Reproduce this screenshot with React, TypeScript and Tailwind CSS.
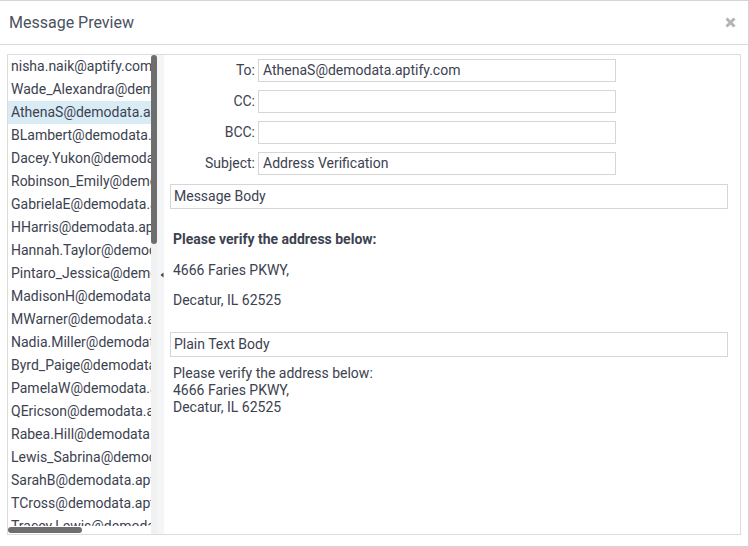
import React from 'react';

const emails = [
  'nisha.naik@aptify.com',
  'Wade_Alexandra@demodata.aptify.com',
  'AthenaS@demodata.aptify.com',
  'BLambert@demodata.aptify.com',
  'Dacey.Yukon@demodata.aptify.com',
  'Robinson_Emily@demodata.aptify.com',
  'GabrielaE@demodata.aptify.com',
  'HHarris@demodata.aptify.com',
  'Hannah.Taylor@demodata.aptify.com',
  'Pintaro_Jessica@demodata.aptify.com',
  'MadisonH@demodata.aptify.com',
  'MWarner@demodata.aptify.com',
  'Nadia.Miller@demodata.aptify.com',
  'Byrd_Paige@demodata.aptify.com',
  'PamelaW@demodata.aptify.com',
  'QEricson@demodata.aptify.com',
  'Rabea.Hill@demodata.aptify.com',
  'Lewis_Sabrina@demodata.aptify.com',
  'SarahB@demodata.aptify.com',
  'TCross@demodata.aptify.com',
  'Tracey.Lewis@demodata.aptify.com',
];

const fields = [
  { label: 'To:', value: 'AthenaS@demodata.aptify.com' },
  { label: 'CC:', value: '' },
  { label: 'BCC:', value: '' },
  { label: 'Subject:', value: 'Address Verification' },
];

const App: React.FC = () => {
  return (
    <div
      className="w-[749px] h-[547px] bg-white border-t border-b border-r border-[#d4d4d4] text-[#3c4250] flex flex-col"
      style={{ fontFamily: 'Roboto, "Liberation Sans", sans-serif' }}
    >
      {/* header */}
      <div className="h-[44px] shrink-0 border-b border-[#dcdcdc] flex items-center justify-between pl-[9px] pr-[12px]">
        <span className="text-[16px] text-[#4a5160]">Message Preview</span>
        <svg width="11" height="11" viewBox="0 0 11 11">
          <path d="M1.5 1.5 L9.5 9.5 M9.5 1.5 L1.5 9.5" stroke="#b4b4b4" strokeWidth="3" strokeLinecap="butt" />
        </svg>
      </div>

      {/* body */}
      <div className="pt-[9px] pl-[7px] pr-[7px]">
        <div className="h-[481px] border border-[#dcdcdc] flex">
          {/* recipient list */}
          <div className="relative w-[143px] overflow-hidden text-[14px]">
            {emails.map((e, i) => (
              <div
                key={e}
                className={`h-[23px] leading-[23px] pl-[3px] whitespace-nowrap ${i === 2 ? 'bg-[#d9ebf5]' : ''}`}
              >
                {e}
              </div>
            ))}
            <div className="absolute left-0 right-0 bottom-0 h-[8px] bg-white">
              <div className="absolute left-0 top-[1px] w-[74px] h-[6px] rounded-full bg-[#6e6e6e]" />
            </div>
          </div>
          {/* vertical scrollbar */}
          <div className="w-[6px] bg-[#f1f1f1]">
            <div className="h-[189px] w-[6px] rounded-full bg-[#6e6e6e]" />
          </div>
          {/* splitter */}
          <div className="w-[7px] bg-[#f4f5f7] flex items-center justify-center">
            <svg width="4" height="6" viewBox="0 0 4 6" className="ml-[2px] mt-[-40px]">
              <path d="M3.5 0.5 L0.5 3 L3.5 5.5 Z" fill="#444" />
            </svg>
          </div>

          {/* preview pane */}
          <div className="flex-1 text-[14px]">
            <div className="pt-[4px] flex flex-col gap-[8px]">
              {fields.map((f) => (
                <div key={f.label} className="flex items-center">
                  <span className="w-[94px] text-right pr-[3px]">{f.label}</span>
                  <div className="w-[358px] h-[23px] border border-[#d6d6d6] px-[4px] leading-[21px]">{f.value}</div>
                </div>
              ))}
            </div>

            <div className="ml-[6px] mr-[12px] mt-[9px]">
              <div className="h-[25px] border border-[#d6d6d6] px-[3px] leading-[23px]">Message Body</div>
              <div className="pl-[3px]">
                <div className="mt-[20px] h-[20px] leading-[20px] font-bold">Please verify the address below:</div>
                <div className="mt-[11px] h-[20px] leading-[20px]">4666 Faries PKWY,</div>
                <div className="mt-[10px] h-[20px] leading-[20px]">Decatur, IL 62525</div>
              </div>
              <div className="mt-[22px] h-[25px] border border-[#d6d6d6] px-[3px] leading-[23px]">Plain Text Body</div>
              <div className="pl-[3px] mt-[8px] leading-[17px]">
                <div>Please verify the address below:</div>
                <div>4666 Faries PKWY,</div>
                <div>Decatur, IL 62525</div>
              </div>
            </div>
          </div>
        </div>
      </div>
    </div>
  );
};

export default App;
